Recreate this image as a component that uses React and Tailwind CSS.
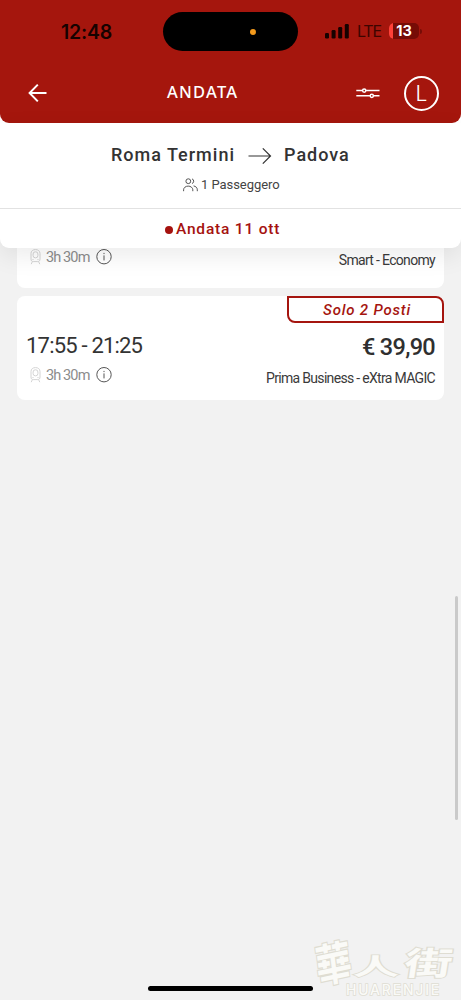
const roboto = "font-['Roboto',sans-serif]";

function SignalIcon() {
  return (
    <svg className="h-4 w-6" viewBox="0 0 24 16" fill="#160200" aria-hidden>
      <rect x="0" y="10" width="4" height="5.5" rx="1.2" />
      <rect x="6.6" y="7" width="4" height="8.5" rx="1.2" />
      <rect x="13.2" y="4" width="4" height="11.5" rx="1.2" />
      <rect x="19.8" y="1" width="4" height="14.5" rx="1.2" />
    </svg>
  );
}

function BackIcon() {
  return (
    <svg className="h-5 w-5" viewBox="0 0 20 20" fill="none" stroke="white" strokeWidth="2" aria-hidden>
      <path d="M18.5 10H2M9.800 1.600L1.600 10l8.200 8.400" />
    </svg>
  );
}

function FilterIcon() {
  return (
    <svg className="h-3 w-6" viewBox="0 0 24 12" fill="#a5160d" stroke="white" strokeWidth="1.5" aria-hidden>
      <path d="M.3 3.6h23.2M.3 8.8h23.2" />
      <circle cx="8.2" cy="3.6" r="1.6" />
      <circle cx="15.8" cy="8.8" r="1.6" />
    </svg>
  );
}

function RouteArrow() {
  return (
    <svg className="mt-px h-4 w-6" viewBox="0 0 24 16" fill="none" stroke="#333" strokeWidth="1.2" aria-hidden>
      <path d="M.5 8h22M14.8.4L22.5 8l-7.7 7.6" />
    </svg>
  );
}

function PeopleIcon() {
  return (
    <svg className="h-[14px] w-[15px]" viewBox="0 0 15 14" fill="none" stroke="#555" strokeWidth="1" aria-hidden>
      <circle cx="5.3" cy="3.2" r="2.4" />
      <path d="M.6 13.2v-1.4a4.6 3.7 0 0 1 9.2 0v1.4M9 .9a2.4 2.4 0 0 1 0 4.6M10.6 7.9c2.2.4 3.7 1.8 3.7 3.9v1.4" />
    </svg>
  );
}

function TrainIcon() {
  return (
    <svg className="h-4 w-[11px]" viewBox="0 0 11 16" fill="none" stroke="#d4d4d4" strokeWidth="1" aria-hidden>
      <path d="M1 10V4.5C1 2 2.8.6 5.5.6S10 2 10 4.500V10c0 1.700-.8 2.600-2.200 2.600H3.200C1.800 12.600 1 11.700 1 10z" />
      <rect x="3.1" y="2.8" width="4.8" height="6" rx="2.2" />
      <path d="M2.4 12.600L1.200 15.200M8.600 12.600l1.200 2.600M2.400 10.600h1.200M7.400 10.600h1.200" />
    </svg>
  );
}

function InfoIcon() {
  return (
    <svg className="h-4 w-4" viewBox="0 0 16 16" fill="none" stroke="#555" strokeWidth="1" aria-hidden>
      <circle cx="8" cy="7.7" r="7.2" />
      <path d="M8 6.4v5M8 3.9v1.200" />
    </svg>
  );
}

function StatusBar() {
  return (
    <div className="flex h-[63px] items-center">
      <span className="ml-[61px] w-[102px] font-['Inter',sans-serif] text-[19.5px] font-semibold leading-[24px] tracking-[-0.2px] text-[#160200]">
        12:48
      </span>
      <div className="flex h-[39px] w-[135px] items-center rounded-full bg-black">
        <span className="ml-[87px] h-[6px] w-[6px] rounded-full bg-[#f49a1c]" />
      </div>
      <div className="-mt-px ml-[27px] flex items-center">
        <SignalIcon />
        <span className="ml-[8px] w-[32px] font-['Inter',sans-serif] text-[16px] leading-[20px] tracking-[-1.2px] text-[#3d0500]">LTE</span>
        <div className="flex h-4 w-[30px] items-center overflow-hidden rounded-[5px] bg-[#760c06]">
          <span className="h-full w-[4px] bg-[#ff4038]" />
          <span className="w-[22px] text-center font-['Inter',sans-serif] text-[14.5px] font-bold leading-4 text-white">13</span>
        </div>
        <span className="ml-px h-[5px] w-[2px] rounded-r-full bg-[#760c06]" />
      </div>
    </div>
  );
}

function Toolbar() {
  return (
    <div className="flex h-[60px] items-center">
      <span className="ml-[28px] w-[139px]">
        <BackIcon />
      </span>
      <h1 className="-mt-[2px] w-[189px] font-['Noto_Sans',sans-serif] text-[16.5px] font-medium leading-[20px] tracking-[1.25px] text-white">
        ANDATA
      </h1>
      <FilterIcon />
      <div className="ml-[24px] flex h-[35px] w-[35px] items-center justify-center rounded-full border-2 border-white font-['Inter',sans-serif] text-[21px] font-light leading-none text-white">
        L
      </div>
    </div>
  );
}

function TripSummary() {
  return (
    <section className={`relative z-10 h-[125px] shrink-0 rounded-b-[9px] bg-white shadow-[0_8px_24px_rgba(0,0,0,0.08)] ${roboto}`}>
      <div className="flex h-[64px] items-center pl-[111px] text-[18px] font-medium leading-[24px] tracking-[1px] text-[#333]">
        <span className="w-[137px] whitespace-nowrap">Roma Termini</span>
        <span className="w-[36px]">
          <RouteArrow />
        </span>
        <span>Padova</span>
      </div>
      <div className="-mt-[11px] flex h-[18px] items-center pl-[183px] text-[13px] tracking-[-0.05px] text-[#444]">
        <PeopleIcon />
        <span className="ml-[3px]">1 Passeggero</span>
      </div>
      <div className="mt-[14px] flex h-[40px] items-center border-t border-[#e2e2e2] pl-[165px]">
        <span className="mt-[2px] h-2 w-2 rounded-full bg-[#a5120f]" />
        <span className="ml-[3px] text-[15.5px] font-medium leading-[20px] tracking-[0.8px] text-[#a5120f]">Andata 11 ott</span>
      </div>
    </section>
  );
}

function Duration() {
  return (
    <div className="flex items-center">
      <TrainIcon />
      <span className="ml-[5px] w-[50px] whitespace-nowrap pt-[2px] text-[14.5px] leading-[16px] tracking-[-0.88px] text-[#8c8c8c]">3h 30m</span>
      <InfoIcon />
    </div>
  );
}

function Fare({ children }) {
  return <span className="mt-[7px] whitespace-nowrap text-[14px] leading-[18px] tracking-[-0.68px] text-[#3a3a3a]">{children}</span>;
}

function TripCards() {
  return (
    <main className={`flex flex-col gap-[8px] pl-[17px] pr-[17px] ${roboto}`}>
      <article className="flex h-[40px] items-start justify-between rounded-b-[8px] bg-white pl-[13px] pr-[9px]">
        <div>
          <Duration />
        </div>
        <div className="-mt-[4px] flex">
          <Fare>Smart - Economy</Fare>
        </div>
      </article>
      <article className="h-[104px] rounded-[8px] bg-white">
        <div className="ml-auto flex h-[27px] w-[157px] items-center justify-center rounded-bl-[8px] rounded-tr-[8px] border-2 border-[#a5150f] pl-[3px] text-[15px] font-medium italic leading-[20px] tracking-[0.8px] text-[#a5150f]">
          Solo 2 Posti
        </div>
        <div className="flex justify-between pl-[9px] pr-[9px]">
          <div className="flex flex-col">
            <span className="mt-[9px] text-[22px] leading-[28px] tracking-[-0.8px] text-[#333]">17:55 - 21:25</span>
            <div className="ml-[4px] mt-[6px]">
              <Duration />
            </div>
          </div>
          <div className="flex flex-col items-end">
            <span className="mt-[10px] text-[23.5px] font-medium leading-[28px] tracking-[-0.7px] text-[#2f2f2f]">€ 39,90</span>
            <span className="mt-px flex">
              <Fare>Prima Business - eXtra MAGIC</Fare>
            </span>
          </div>
        </div>
      </article>
    </main>
  );
}

function Watermark() {
  return (
    <div className="absolute bottom-0 right-0 flex h-[64px] w-[146px] flex-col text-[#fafaf7] [paint-order:stroke_fill] [-webkit-text-stroke:2px_#dfddd2]">
      <div className="flex h-[46px] items-start font-['Noto_Sans_CJK_TC',sans-serif] font-bold leading-none">
        <span className="mt-[6px] w-[40px] origin-center -rotate-12 -skew-x-6 scale-y-125 text-[36px]">華</span>
        <span className="mt-[13px] w-[42px] scale-x-150 scale-y-75 text-center text-[31px]">人</span>
        <span className="ml-[16px] mt-[9px] -skew-x-6 scale-x-150 text-[32px]">街</span>
      </div>
      <div className="ml-[31px] mt-[1px] font-['Inter',sans-serif] text-[14px] font-medium leading-[14px] tracking-[1.8px] [-webkit-text-stroke:1.5px_#dfddd2]">HUARENJIE</div>
    </div>
  );
}

export default function App() {
  return (
    <div className="relative flex h-[1000px] w-[461px] flex-col overflow-hidden bg-[#f2f2f2]">
      <div className="shrink-0 bg-white">
        <header className="h-[123px] rounded-b-[9px] bg-[#a5160d]">
          <StatusBar />
          <Toolbar />
        </header>
      </div>
      <TripSummary />
      <TripCards />
      <div className="absolute right-[3px] top-[596px] h-[224px] w-[3px] rounded-full bg-[#cacaca]" />
      <Watermark />
      <div className="absolute bottom-[9px] left-[148px] h-[5px] w-[165px] rounded-full bg-black" />
    </div>
  );
}
